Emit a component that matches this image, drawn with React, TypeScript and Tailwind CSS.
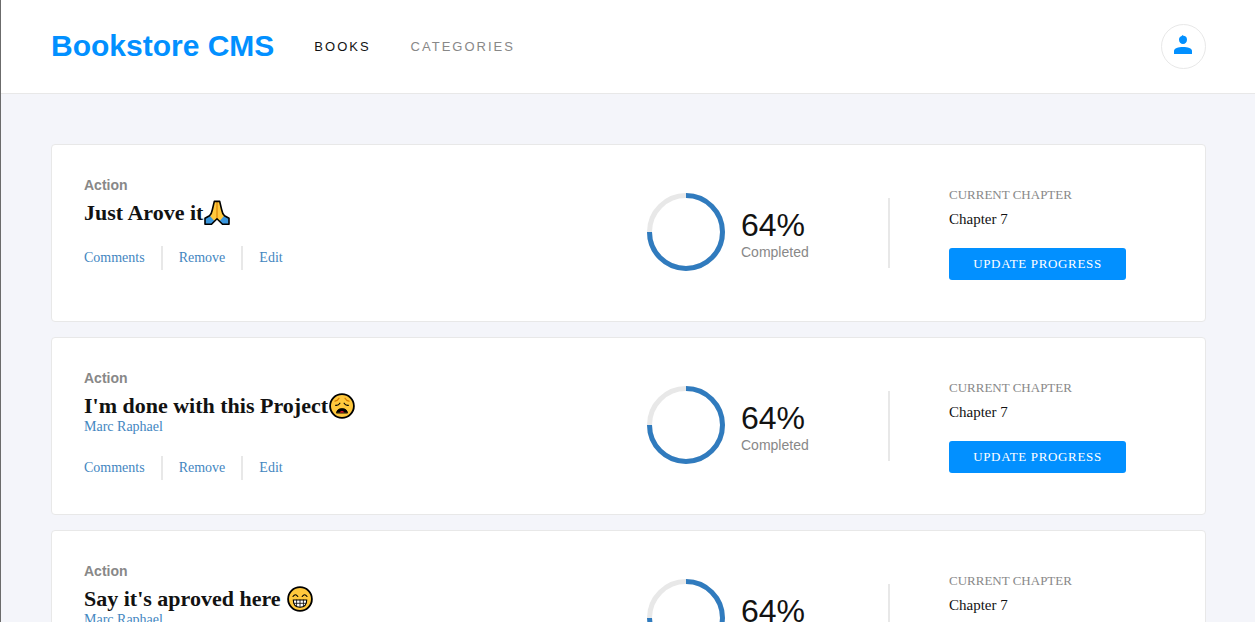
import React from 'react';

type Emoji = 'pray' | 'weary' | 'grin';

interface Book {
  category: string;
  title: string;
  emoji: Emoji;
  author?: string;
  chapter: string;
  completed: number;
}

const books: Book[] = [
  { category: 'Action', title: 'Just Arove it', emoji: 'pray', chapter: 'Chapter 7', completed: 64 },
  { category: 'Action', title: "I'm done with this Project", emoji: 'weary', author: 'Marc Raphael', chapter: 'Chapter 7', completed: 64 },
  { category: 'Action', title: "Say it's aproved here ", emoji: 'grin', author: 'Marc Raphael', chapter: 'Chapter 7', completed: 64 },
];

function PrayIcon() {
  return (
    <svg className="ml-px size-[26px] shrink-0" viewBox="0 0 26 26" role="img" aria-label="Folded hands" strokeLinejoin="round">
      <path d="M10.3 1.4 H15.7 L17.6 9.5 Q18.3 13.5 20.5 15.8 L25 18.3 V24.3 H18.5 L13 18.8 L7.5 24.3 H1 V18.3 L5.5 15.8 Q7.7 13.5 8.4 9.5Z" fill="#ffc83d" />
      <path d="M1 18.3 L5.8 15.8 L10.6 21.2 L7.5 24.3 H1Z M25 18.3 L20.2 15.8 L15.4 21.2 L18.5 24.3 H25Z" fill="#3a96dd" />
      <path d="M13 2 V18.5" stroke="#e08f10" strokeWidth="1.4" />
      <path d="M10.3 1.4 H15.7 L17.6 9.5 Q18.3 13.5 20.5 15.8 L25 18.3 V24.3 H18.5 L13 18.8 L7.5 24.3 H1 V18.3 L5.5 15.8 Q7.7 13.5 8.4 9.5Z" fill="none" stroke="#000" strokeWidth="1.6" />
    </svg>
  );
}

function WearyIcon() {
  return (
    <svg className="ml-px size-[26px] shrink-0" viewBox="0 0 26 26" role="img" aria-label="Weary face" fill="none" strokeLinecap="round">
      <circle cx="13" cy="13" r="11.9" fill="#ffc83d" stroke="#000" strokeWidth="1.8" />
      <path d="M6 8.2 Q8.6 7.7 10 5.2 M20 8.2 Q17.4 7.7 16 5.2" stroke="#d67d00" strokeWidth="1.3" />
      <path d="M6.5 12.3 Q9.6 12.6 10.9 10.2 M19.5 12.3 Q16.4 12.6 15.1 10.2" stroke="#000" strokeWidth="1.1" />
      <path d="M7.5 19.7 Q8 15.6 13 15.6 Q18 15.6 18.5 19.7Z" fill="#000" stroke="#000" strokeWidth="0.8" />
      <path d="M10.6 19.4 Q13 16.6 15.4 19.4Z" fill="#e81224" />
    </svg>
  );
}

function GrinIcon() {
  return (
    <svg className="ml-px size-[26px] shrink-0" viewBox="0 0 26 26" role="img" aria-label="Beaming face" fill="none" strokeLinecap="round">
      <circle cx="13" cy="13" r="11.9" fill="#ffc83d" stroke="#000" strokeWidth="1.8" />
      <path d="M6 10.5 Q8.4 7 10.8 10.5 M15.2 10.5 Q17.6 7 20 10.5" stroke="#000" strokeWidth="1.1" />
      <path d="M6.3 14 H19.7 Q19.7 21.2 13 21.2 Q6.3 21.2 6.3 14Z" fill="#fff" stroke="#000" strokeWidth="1.1" />
      <path d="M7 17.3 H19 M9.6 14 V20 M13 14 V21 M16.4 14 V20" stroke="#000" strokeWidth="0.8" />
    </svg>
  );
}

const emojis: Record<Emoji, () => React.JSX.Element> = {
  pray: PrayIcon,
  weary: WearyIcon,
  grin: GrinIcon,
};

function ProgressRing() {
  return (
    <svg className="size-[78px] shrink-0" viewBox="0 0 78 78" fill="none" strokeWidth="5" aria-hidden="true">
      <circle cx="39" cy="39" r="36.5" stroke="#e8e8e8" />
      <path d="M39 2.5 A36.5 36.5 0 1 1 2.5 39" stroke="#307bbe" />
    </svg>
  );
}

function Header() {
  return (
    <header className="flex items-center border-b border-[#e8e8e8] bg-white py-6 pr-[49px] pl-[50px] font-['Liberation_Sans',sans-serif]">
      <h1 className="pr-10 pb-0.5 text-[30px] leading-8 font-bold text-[#0290ff]">Bookstore CMS</h1>
      <nav className="flex flex-1 gap-10 text-[13px] leading-4 tracking-[2px]">
        <a href="#books" className="text-[#121212]">BOOKS</a>
        <a href="#categories" className="text-[#888888]">CATEGORIES</a>
      </nav>
      <button type="button" aria-label="Profile" className="flex size-[45px] items-center justify-center rounded-full border border-[#e8e8e8] pb-1">
        <svg className="h-[19px] w-5" viewBox="0 0 20 19" fill="#0290ff" aria-hidden="true">
          <path d="M8.5 0 C9.1 .6 9.8 1 10.6 1.1 C12.2 1.5 13 3 13 4.7 C13 7.1 11.3 9 9 9 C6.7 9 5 7.1 5 4.7 C5 3 5.8 1.8 7.2 1.2 C7.8 .9 8.2 .5 8.5 0Z" />
          <path d="M0 19 V16 C0 13.4 4.2 12 9 12 C13.8 12 18 13.4 18 16 V19Z" />
        </svg>
      </button>
    </header>
  );
}

function BookCard({ book }: { book: Book }) {
  const Icon = emojis[book.emoji];
  return (
    <li className="flex min-h-[178px] items-center rounded border border-[#e8e8e8] bg-white max-lg:flex-wrap">
      <div className="flex-1 self-start pt-[30px] pb-[34px] pl-8">
        <p className="mb-1.5 font-['Liberation_Sans',sans-serif] text-sm leading-5 font-bold text-[#888888]">{book.category}</p>
        <h2 className="mb-px flex h-6 items-center text-[22px] leading-6 font-bold whitespace-pre text-[#121212]">
          {book.title}
          <Icon />
        </h2>
        {book.author && <p className="text-sm leading-4 text-[#4386bf]">{book.author}</p>}
        <div className="mt-[21px] flex h-6 items-center gap-4 text-sm text-[#4386bf]">
          <button type="button">Comments</button>
          <span className="h-6 w-0.5 bg-[#e8e8e8]" />
          <button type="button">Remove</button>
          <span className="h-6 w-0.5 bg-[#e8e8e8]" />
          <button type="button">Edit</button>
        </div>
      </div>
      <div className="flex w-[241px] items-center gap-4 pb-0.5 font-['Liberation_Sans',sans-serif]">
        <ProgressRing />
        <div className="pt-0.5">
          <p className="text-[32px] leading-[38px] text-[#121212]">{book.completed}%</p>
          <p className="text-sm leading-4 text-[#888888]">Completed</p>
        </div>
      </div>
      <span className="h-[70px] w-0.5 bg-[#e8e8e8]" />
      <div className="w-[315px] pb-0.5 pl-[59px]">
        <p className="text-[13px] leading-5 text-[#888888]">CURRENT CHAPTER</p>
        <p className="mt-1 text-[15px] leading-5 text-[#121212]">{book.chapter}</p>
        <button type="button" className="mt-[19px] h-8 w-[177px] rounded-[3px] bg-[#0290ff] text-[13px] leading-4 tracking-wider text-white">
          UPDATE PROGRESS
        </button>
      </div>
    </li>
  );
}

export default function App() {
  return (
    <div className="min-h-screen border-l border-[#6b6b6b] bg-[#f4f5fa] font-['Liberation_Serif',serif]">
      <Header />
      <main className="py-[50px] pr-[49px] pl-[50px]">
        <ul className="flex flex-col gap-[15px]">
          {books.map((book) => (
            <BookCard key={book.title} book={book} />
          ))}
        </ul>
      </main>
    </div>
  );
}
